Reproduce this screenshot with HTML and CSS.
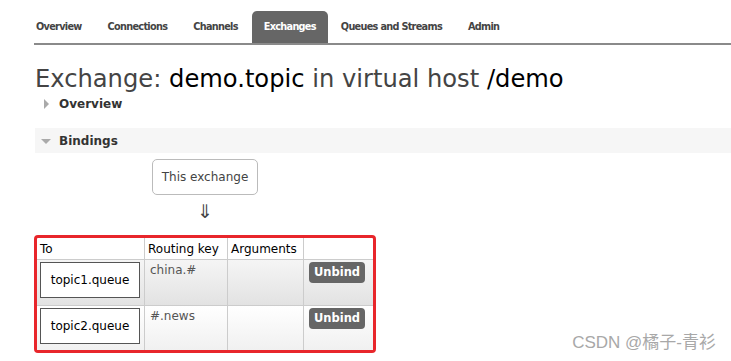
FILE: index.html
```html
<!DOCTYPE html>
<html lang="en">
<head>
<meta charset="UTF-8" />
<title>Exchange: demo.topic</title>
<link rel="stylesheet" href="styles.css">
</head>
<body>

<nav class="tabs">
  <ul>
    <li>Overview</li>
    <li>Connections</li>
    <li>Channels</li>
    <li class="active">Exchanges</li>
    <li>Queues and Streams</li>
    <li>Admin</li>
  </ul>
</nav>

<main class="main">
  <h1>Exchange: <b>demo.topic</b> in virtual host <b>/demo</b></h1>

  <div class="section-head closed"><span class="arrow-right"></span>Overview</div>

  <div class="section-head open"><span class="arrow-down"></span>Bindings</div>

  <div class="bindings">
    <div class="this-exchange">This exchange</div>
    <div class="down-arrow">&#8659;</div>

    <div class="highlight">
      <table class="list">
        <thead>
          <tr>
            <th class="col-to">To</th>
            <th class="col-key">Routing key</th>
            <th class="col-args">Arguments</th>
            <th class="col-act"></th>
          </tr>
        </thead>
        <tbody>
          <tr class="alt1">
            <td><div class="queue-box">topic1.queue</div></td>
            <td class="key">china.#</td>
            <td></td>
            <td><span class="btn">Unbind</span></td>
          </tr>
          <tr class="alt2">
            <td><div class="queue-box">topic2.queue</div></td>
            <td class="key">#.news</td>
            <td></td>
            <td><span class="btn">Unbind</span></td>
          </tr>
        </tbody>
      </table>
    </div>
  </div>
</main>

<div class="watermark">CSDN @橘子-青衫</div>

</body>
</html>
```

FILE: styles.css
```css
body {
  margin: 0;
  font-family: "DejaVu Sans", Verdana, sans-serif;
  font-size: 12px;
  color: #444;
  background-color: #fff;
  position: relative;
  height: 361px;
  overflow: hidden;
}

/* top navigation */
.tabs { padding-top: 11px; }

.tabs ul {
  display: flex;
  list-style: none;
  margin: 0 0 0 34px;
  padding: 0;
  border-bottom: 2px solid #8a8a8a;
}

.tabs li {
  font-family: "DejaVu Sans Condensed", "Liberation Sans", Arial, sans-serif;
  font-weight: bold;
  font-size: 10.8px;
  letter-spacing: -0.7px;
  color: #444;
  height: 32px;
  line-height: 32px;
  padding: 0 13px;
  border-radius: 5px 5px 0 0;
}

.tabs li:first-child { padding-left: 2px; }

.tabs li.active {
  background-color: #666;
  color: #fff;
  padding: 0 12px;
  margin-left: 1px;
}

/* page body */
.main { padding-left: 35px; }

h1 {
  font-size: 24.2px;
  font-weight: normal;
  line-height: 26px;
  color: #444;
  margin: 21px 0 0;
}

h1 b { font-weight: normal; color: #000; }

.section-head {
  display: flex;
  align-items: center;
  height: 24px;
  padding-left: 24px;
  position: relative;
  font-weight: bold;
  color: #333;
}

.section-head.open {
  background-color: #f6f6f6;
  height: 25px;
  margin-top: 12px;
}

.arrow-right {
  position: absolute;
  left: 9px;
  top: 7px;
  border-left: 5px solid #aaa;
  border-top: 5px solid transparent;
  border-bottom: 5px solid transparent;
}

.arrow-down {
  position: absolute;
  left: 6px;
  top: 11px;
  border-top: 5px solid #aaa;
  border-left: 5px solid transparent;
  border-right: 5px solid transparent;
}

.bindings { padding-top: 6px; margin-left: -1px; }

.this-exchange {
  width: 104px;
  height: 34px;
  line-height: 34px;
  margin-left: 118px;
  border: 1px solid #bbb;
  border-radius: 5px;
  text-align: center;
  color: #444;
}

.down-arrow {
  width: 106px;
  margin-left: 118px;
  text-align: center;
  font-size: 19px;
  line-height: 22px;
  height: 22px;
  margin-top: 5px;
  color: #444;
}

.highlight {
  display: inline-block;
  margin-top: 13px;
  border: 3px solid #e8262b;
  border-radius: 4px;
}

.list {
  border-collapse: collapse;
  color: #000;
}

.list th {
  font-weight: normal;
  text-align: left;
  height: 21px;
  padding: 0 3px;
  border-left: 1px solid #ccc;
  border-bottom: 1px solid #ccc;
}

.list th:first-child, .list td:first-child { border-left: none; }

.col-to { width: 101px; }
.col-key { width: 76px; }
.col-args { width: 69px; }
.col-act { width: 63px; }

.list td {
  vertical-align: top;
  padding: 2px 3px;
  border-left: 1px solid #ccc;
  border-bottom: 1px solid #ccc;
  height: 39px;
}

.list tr:last-child td { border-bottom: none; height: 38px; }

.alt1 { background: linear-gradient(#f5f5f5, #e2e2e2); }
.alt2 { background: linear-gradient(#fff, #f0f0f0); }

.list td.key {
  color: #555;
  padding: 3px 5px;
  line-height: 14px;
}

.queue-box {
  width: 98px;
  height: 34px;
  line-height: 34px;
  border: 1px solid #555;
  background-color: #fff;
  text-align: center;
  color: #000;
}

.btn {
  display: inline-block;
  margin-left: 2px;
  width: 56px;
  height: 21px;
  line-height: 21px;
  background-color: #666;
  color: #fff;
  font-weight: bold;
  font-size: 11.5px;
  text-align: center;
  border-radius: 4px;
}

.watermark {
  position: absolute;
  right: 15px;
  bottom: 8px;
  font-family: "Liberation Sans", "Noto Sans CJK SC", sans-serif;
  font-size: 17px;
  color: #a8a8a8;
}
```
